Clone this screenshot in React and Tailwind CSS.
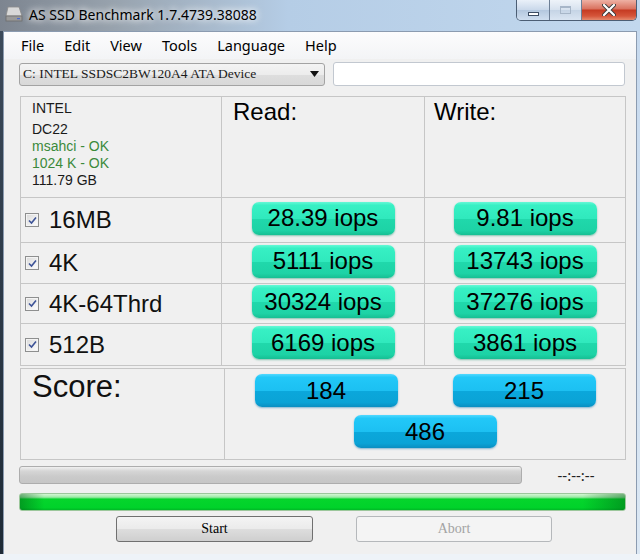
import React from "react";

const arial = "font-['Liberation_Sans',Arial,sans-serif]";
const segoe = "font-['Noto_Sans','Open_Sans',sans-serif]";
const ming = "font-['Liberation_Serif','Times_New_Roman',serif]";

const pillTone = {
  green:
    "bg-[linear-gradient(to_bottom,#66f8d6_0%,#37f0c4_10%,#30e9bd_50%,#20d8ab_53%,#1dd3a6_86%,#16bf93_100%)] shadow-[0_1px_2px_rgba(0,140,100,0.45)]",
  blue:
    "bg-[linear-gradient(to_bottom,#52d9ff_0%,#22c8f8_10%,#1cc0f2_50%,#0ba7db_53%,#0aa3d6_86%,#0a8ec1_100%)] shadow-[0_1px_2px_rgba(0,110,170,0.45)]",
};

function Pill({ tone = "green", children }) {
  return (
    <div
      className={`w-[143px] h-[33px] rounded-[7px] flex items-center justify-center text-[24px] leading-none text-black ${arial} ${pillTone[tone]}`}
    >
      {children}
    </div>
  );
}

function CheckBox() {
  // Win7 checkbox, always ticked
  return (
    <div className="w-[14px] h-[14px] border border-[#8e8f8f] bg-[#f4f4f4] p-[1px]">
      <div className="w-full h-full bg-[linear-gradient(135deg,#dcdcdc,#fbfbfb)] flex items-center justify-center">
        <svg width="9" height="9" viewBox="0 0 9 9">
          <path d="M1 4.5 L3.5 7 L8 1.5" fill="none" stroke="#3d5397" strokeWidth="1.6" />
        </svg>
      </div>
    </div>
  );
}

const rows = [
  { label: "16MB", read: "28.39 iops", write: "9.81 iops", h: "h-[45px]" },
  { label: "4K", read: "5111 iops", write: "13743 iops", h: "h-[41px]" },
  { label: "4K-64Thrd", read: "30324 iops", write: "37276 iops", h: "h-[40px]" },
  { label: "512B", read: "6169 iops", write: "3861 iops", h: "h-[41px]" },
];

function TitleBar() {
  return (
    <div className="h-[31px] flex items-start bg-[linear-gradient(to_right,#7d8590_0%,#98a3ae_18%,#b5cde6_45%,#c2d8ee_100%)]">
      <div className="pl-[5px] pt-[6px]">
        <svg width="18" height="16" viewBox="0 0 18 16">
          <path d="M3 1 H14 L17 10 H1 Z" fill="#d8d8d8" stroke="#8a8a8a" strokeWidth="0.8" />
          <rect x="1" y="10" width="16" height="5" fill="#9a9a9a" stroke="#6c6c6c" strokeWidth="0.8" />
          <rect x="12" y="12" width="3" height="1.2" fill="#4b6cd0" />
        </svg>
      </div>
      <div
        className={`pl-[6px] pt-[4px] text-[14px] text-black ${segoe} [text-shadow:0_0_6px_#ffffff,0_0_10px_#ffffff]`}
      >
        AS SSD Benchmark 1.7.4739.38088
      </div>
      <div className="ml-auto mr-[3px] flex h-[21px] rounded-b-[5px] border border-t-0 border-[#4c5e74] overflow-hidden">
        <div className="w-[33px] flex items-end justify-center pb-[4px] border-r border-[#6d7f96] bg-[linear-gradient(to_bottom,#eaf1f9,#c9d8ea_50%,#b3c7de_51%,#cfdeef)]">
          <div className="w-[11px] h-[4px] bg-white border border-[#3d4d63]" />
        </div>
        <div className="w-[32px] flex items-center justify-center border-r border-[#6d7f96] bg-[linear-gradient(to_bottom,#eef3f9,#d6e1ee_50%,#c5d4e5_51%,#dae5f2)]">
          <div className="w-[11px] h-[8px] border border-[#a7b6c8] border-t-[2px]" />
        </div>
        <div className="w-[54px] flex items-center justify-center bg-[linear-gradient(to_bottom,#eeb1a4,#d9715e_45%,#c53a22_50%,#d5553a_80%,#e58a6e)]">
          <svg width="14" height="12" viewBox="0 0 14 12">
            <path d="M2 1 L12 11 M12 1 L2 11" stroke="#3b3b3b" strokeWidth="4" strokeLinecap="round" />
            <path d="M2 1 L12 11 M12 1 L2 11" stroke="#ffffff" strokeWidth="2.2" strokeLinecap="round" />
          </svg>
        </div>
      </div>
    </div>
  );
}

export default function App() {
  return (
    <div className="w-[640px] h-[560px] overflow-hidden bg-[#c8dbee] flex flex-col">
      <TitleBar />
      <div className="flex flex-1">
        <div className="w-[3px] bg-[linear-gradient(to_bottom,#3c4a5a,#1e2a36)]" />
        <div className="w-[634px] h-[523px] bg-[#f0f0f0] border border-b-0 border-[#8b9bb0] flex flex-col">
          {/* menu bar */}
          <div
            className={`h-[27px] flex items-center gap-[20px] pl-[17px] text-[14.5px] text-black bg-[linear-gradient(to_bottom,#fcfcfd,#f3f4f6)] ${segoe}`}
          >
            <span>File</span>
            <span>Edit</span>
            <span>View</span>
            <span>Tools</span>
            <span>Language</span>
            <span>Help</span>
          </div>

          {/* drive selector */}
          <div className="flex items-center gap-[8px] pl-[15px] pt-[3px]">
            <div
              className={`w-[306px] h-[23px] rounded-[3px] border border-[#a3a3a3] bg-[linear-gradient(to_bottom,#f4f4f4,#ececec_50%,#dedede_51%,#d8d8d8)] flex items-center pl-[3px] pr-[5px] text-[13.5px] text-[#1a1a1a] ${ming}`}
            >
              <span>C: INTEL SSDSC2BW120A4 ATA Device</span>
              <svg className="ml-auto" width="9" height="6" viewBox="0 0 9 6">
                <path d="M0 0 H9 L4.5 6 Z" fill="#111" />
              </svg>
            </div>
            <div className="w-[292px] h-[24px] rounded-[3px] border border-[#c2c8d0] bg-white" />
          </div>

          {/* results table */}
          <div className={`ml-[16px] mt-[10px] w-[606px] border border-[#c6c6c6] ${arial}`}>
            <div className="flex h-[101px] border-b border-[#c6c6c6]">
              <div className="w-[201px] border-r border-[#c6c6c6] pl-[11px] pt-[2px] text-[14px]">
                <div className="leading-[18px] text-[#1a1a1a]">INTEL</div>
                <div className="mt-[4px] leading-[17px]">
                  <div className="text-[#1a1a1a]">DC22</div>
                  <div className="text-[#3b8a3b]">msahci - OK</div>
                  <div className="text-[#3b8a3b]">1024 K - OK</div>
                  <div className="text-[#1a1a1a]">111.79 GB</div>
                </div>
              </div>
              <div className="w-[203px] border-r border-[#c6c6c6] pl-[11px] pt-[1px] text-[24px] leading-[28px]">
                Read:
              </div>
              <div className="w-[200px] pl-[9px] pt-[1px] text-[24px] leading-[28px]">Write:</div>
            </div>

            {rows.map((r, i) => (
              <div
                key={r.label}
                className={`flex ${r.h} ${i < rows.length - 1 ? "border-b border-[#c6c6c6]" : ""}`}
              >
                <div className="w-[201px] border-r border-[#c6c6c6] flex items-center pl-[4px] gap-[10px]">
                  <CheckBox />
                  <span className="text-[24px] leading-none text-[#111]">{r.label}</span>
                </div>
                <div className="w-[203px] border-r border-[#c6c6c6] flex items-center justify-center pb-[4px]">
                  <Pill>{r.read}</Pill>
                </div>
                <div className="w-[200px] flex items-center justify-center pb-[4px]">
                  <Pill>{r.write}</Pill>
                </div>
              </div>
            ))}
          </div>

          {/* score */}
          <div className={`ml-[16px] mt-[2px] w-[606px] h-[92px] border border-[#c6c6c6] flex ${arial}`}>
            <div className="w-[204px] border-r border-[#c6c6c6] pl-[11px] text-[31px] leading-[36px] text-[#111]">
              Score:
            </div>
            <div className="flex-1 flex flex-col items-center pt-[5px] gap-[8px]">
              <div className="flex gap-[55px]">
                <Pill tone="blue">184</Pill>
                <Pill tone="blue">215</Pill>
              </div>
              <Pill tone="blue">486</Pill>
            </div>
          </div>

          {/* progress */}
          <div className="pl-[15px] mt-[4px] flex items-center">
            <div className="w-[503px] h-[18px] rounded-[3px] border border-[#adadad] bg-[linear-gradient(to_bottom,#f0f0f0,#d6d6d6_25%,#cacaca_60%,#c6c6c6)]" />
            <div className={`flex-1 text-center pl-[2px] pr-[8px] text-[15px] text-[#222] ${segoe}`}>
              --:--:--
            </div>
          </div>
          <div className="pl-[15px] mt-[6px]">
            <div className="w-[607px] h-[18px] rounded-[3px] border border-[#9cc79c] bg-[linear-gradient(to_right,rgba(0,90,20,0.45),rgba(0,90,20,0)_4%,rgba(0,90,20,0)_93%,rgba(0,90,20,0.45)),linear-gradient(to_bottom,#d4f7d4_0%,#9ceaa6_20%,#05d52c_32%,#00d22a_85%,#00b926_100%)]" />
          </div>

          {/* buttons */}
          <div className={`flex gap-[43px] pl-[112px] mt-[5px] text-[14px] ${ming}`}>
            <div className="w-[197px] h-[26px] rounded-[3px] border border-[#707070] bg-[linear-gradient(to_bottom,#f4f4f4,#ebebeb_48%,#dddddd_52%,#cfcfcf)] flex items-center justify-center text-black">
              Start
            </div>
            <div className="w-[196px] h-[26px] rounded-[3px] border border-[#b5b8bb] bg-[#f4f4f4] flex items-center justify-center text-[#a3a3a3]">
              Abort
            </div>
          </div>
        </div>
        <div className="flex-1 bg-[linear-gradient(to_bottom,#c6d9ee,#dce8f4)]" />
      </div>
      <div className="h-[6px] bg-[#eef3f8]" />
    </div>
  );
}
